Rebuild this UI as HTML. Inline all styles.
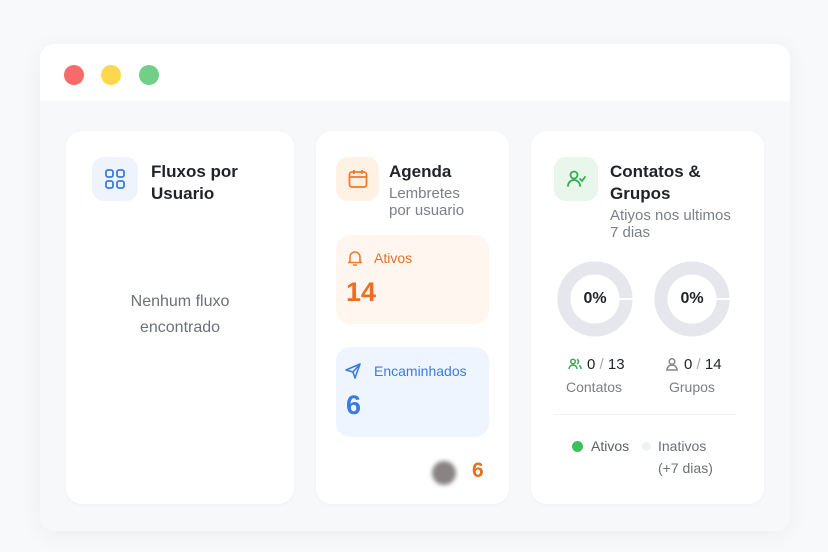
<!DOCTYPE html>
<html><head><meta charset="utf-8"><style>
*{margin:0;padding:0;box-sizing:border-box}
body{width:828px;height:552px;background:#f8f9fb;font-family:"Liberation Sans",sans-serif;position:relative;overflow:hidden}
.win{position:absolute;left:40px;top:44px;width:750px;height:487px;background:#f7f8fa;border-radius:14px;box-shadow:0 4px 24px rgba(0,0,0,.05);overflow:hidden}
.bar{position:absolute;left:0;top:0;width:100%;height:57px;background:#fff}
.dot{position:absolute;top:21px;width:20px;height:20px;border-radius:50%}
.card{position:absolute;top:131px;height:373px;background:#fff;border-radius:16px;box-shadow:0 1px 4px rgba(0,0,0,.03)}
.ic{position:absolute;width:46px;height:44px;border-radius:12px;display:flex;align-items:center;justify-content:center}
.t{position:absolute;font-size:17px;font-weight:bold;color:#1f2328;line-height:22px}
.s{position:absolute;font-size:15px;color:#7a7f88;line-height:17px}
.abs{position:absolute}
</style></head><body>
<div class="win">
<div class="bar">
<div class="dot" style="left:24px;background:#f76b6b"></div>
<div class="dot" style="left:61px;background:#fdd84f"></div>
<div class="dot" style="left:99px;background:#72cf88"></div>
</div>
</div>

<div class="card" style="left:66px;width:228px">
<div class="ic" style="left:26px;top:26px;background:#eef3fd">
<svg width="22" height="22" viewBox="0 0 22 22" fill="none" stroke="#3b7be0" stroke-width="1.8"><rect x="2" y="2" width="7" height="7" rx="2"/><rect x="13" y="2" width="7" height="7" rx="2"/><rect x="2" y="13" width="7" height="7" rx="2"/><rect x="13" y="13" width="7" height="7" rx="2"/></svg>
</div>
<div class="t" style="left:85px;top:30px">Fluxos por<br>Usuario</div>
<div class="abs" style="left:0;width:228px;top:158px;text-align:center;font-size:16px;line-height:26px;color:#6b7079">Nenhum fluxo<br>encontrado</div>
</div>

<div class="card" style="left:316px;width:193px">
<div class="ic" style="left:20px;top:26px;width:43px;background:#fff1e3">
<svg width="22" height="22" viewBox="0 0 22 22" fill="none" stroke="#f07a2a" stroke-width="1.8"><rect x="2.5" y="4" width="17" height="15" rx="2.5"/><path d="M2.5 9h17M7 2v4M15 2v4"/></svg>
</div>
<div class="t" style="left:73px;top:30px">Agenda</div>
<div class="s" style="left:73px;top:54px">Lembretes<br>por usuario</div>
<div class="abs" style="left:20px;top:104px;width:153px;height:89px;background:#fff7ef;border-radius:14px">
<svg class="abs" style="left:10px;top:14px" width="18" height="18" viewBox="0 0 18 18" fill="none" stroke="#f07a2a" stroke-width="1.6"><path d="M4 12V8a5 5 0 0110 0v4l1 1.5H3z M7 16h4"/></svg>
<div class="abs" style="left:38px;top:15px;font-size:14px;color:#ec6e24">Ativos</div>
<div class="abs" style="left:10px;top:42px;font-size:27px;font-weight:bold;color:#ec6e24">14</div>
</div>
<div class="abs" style="left:20px;top:216px;width:153px;height:90px;background:#eff5fe;border-radius:14px">
<svg class="abs" style="left:8px;top:15px" width="18" height="18" viewBox="0 0 18 18" fill="none" stroke="#3b7be0" stroke-width="1.6" stroke-linejoin="round"><path d="M2 8L16 2 11 16 9 10z M9 10L16 2"/></svg>
<div class="abs" style="left:38px;top:16px;font-size:14px;color:#3b7be0">Encaminhados</div>
<div class="abs" style="left:10px;top:43px;font-size:27px;font-weight:bold;color:#3b7be0">6</div>
</div>
<div class="abs" style="left:116px;top:330px;width:24px;height:24px;border-radius:50%;background:#8a8384;filter:blur(2px)"></div>
<div class="abs" style="left:156px;top:328px;font-size:21px;font-weight:bold;color:#ec6e24">6</div>
</div>

<div class="card" style="left:531px;width:233px">
<div class="ic" style="left:23px;top:26px;width:44px;background:#e8f6ec">
<svg width="22" height="22" viewBox="0 0 22 22" fill="none" stroke="#2fae4f" stroke-width="1.8" stroke-linecap="round"><circle cx="9" cy="7" r="3.5"/><path d="M3 18a6 6 0 0112 0M15 11l2 2 3-4"/></svg>
</div>
<div class="t" style="left:79px;top:30px">Contatos &amp;<br>Grupos</div>
<div class="s" style="left:79px;top:76px">Atiyos nos ultimos<br>7 dias</div>
<svg class="abs" style="left:26px;top:130px" width="76" height="76"><circle cx="38" cy="38" r="31" fill="none" stroke="#e6e7ec" stroke-width="13"/><rect x="62" y="37" width="14" height="2" fill="#fff"/></svg>
<svg class="abs" style="left:123px;top:130px" width="76" height="76"><circle cx="38" cy="38" r="31" fill="none" stroke="#e6e7ec" stroke-width="13"/><rect x="62" y="37" width="14" height="2" fill="#fff"/></svg>
<div class="abs" style="left:26px;width:76px;top:159px;text-align:center;font-size:16px;font-weight:bold;color:#1f2328">0%</div>
<div class="abs" style="left:123px;width:76px;top:159px;text-align:center;font-size:16px;font-weight:bold;color:#1f2328">0%</div>
<svg class="abs" style="left:37px;top:226px" width="14" height="14" viewBox="0 0 14 14" fill="none" stroke="#2fae4f" stroke-width="1.5"><circle cx="5" cy="4.5" r="2.3"/><path d="M1 12a4 4 0 018 0M9 2.5a2.2 2.2 0 010 4.2M11 8.5a3.5 3.5 0 012 3.5"/></svg>
<div class="abs" style="left:56px;top:225px;font-size:15px;color:#1f2328">0 <span style="color:#aaa">/</span> 13</div>
<div class="abs" style="left:35px;top:248px;font-size:14px;color:#7a7f88">Contatos</div>
<svg class="abs" style="left:134px;top:226px" width="14" height="14" viewBox="0 0 14 14" fill="none" stroke="#8a8384" stroke-width="1.5"><circle cx="7" cy="4.5" r="2.8"/><path d="M2 13a5 5 0 0110 0z"/></svg>
<div class="abs" style="left:153px;top:225px;font-size:15px;color:#1f2328">0 <span style="color:#aaa">/</span> 14</div>
<div class="abs" style="left:138px;top:248px;font-size:14px;color:#7a7f88">Grupos</div>
<div class="abs" style="left:23px;top:283px;width:183px;height:1px;background:#f0f1f3"></div>
<div class="abs" style="left:41px;top:310px;width:11px;height:11px;border-radius:50%;background:#3cc15a"></div>
<div class="abs" style="left:60px;top:307px;font-size:14px;color:#5a5f68">Ativos</div>
<div class="abs" style="left:111px;top:311px;width:9px;height:9px;border-radius:50%;background:#eef3f2"></div>
<div class="abs" style="left:127px;top:304px;font-size:14px;color:#6b7079;line-height:22px">Inativos<br>(+7 dias)</div>
</div>
</body></html>
